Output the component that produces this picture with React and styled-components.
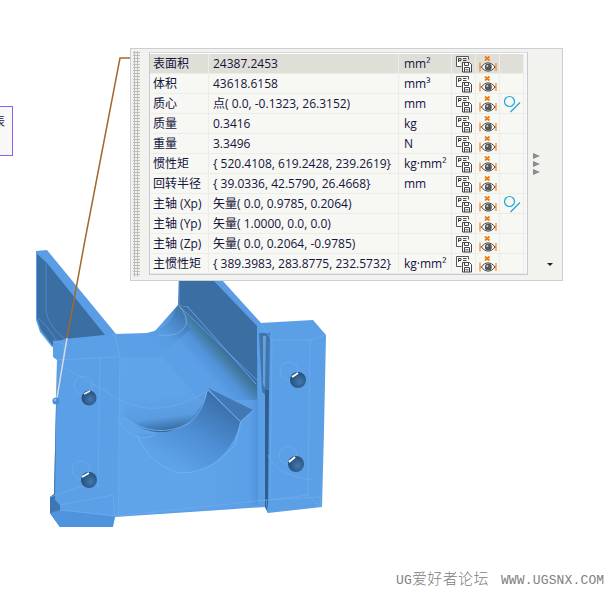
import React from "react";
import styled, { createGlobalStyle } from "styled-components";

const GlobalStyle = createGlobalStyle`
  html, body {
    margin: 0;
    padding: 0;
    background: #fff;
  }
`;

const Page = styled.div`
  position: relative;
  width: 609px;
  height: 592px;
  overflow: hidden;
  background: #fff;
  font-family: "Open Sans", "Noto Sans CJK SC", sans-serif;
`;

const Canvas = styled.svg`
  position: absolute;
  left: 0;
  top: 0;
`;

const SideTab = styled.div`
  position: absolute;
  left: -1px;
  top: 106px;
  width: 12px;
  height: 48px;
  border: 1px solid #8b5cf6;
  background: #f8f8f6;
  overflow: hidden;
  font-size: 12px;
  line-height: 30px;
  color: #1a1a40;
  text-indent: -7px;
`;

const Panel = styled.div`
  position: absolute;
  left: 130px;
  top: 48px;
  width: 433px;
  height: 233px;
  box-sizing: border-box;
  display: flex;
  border: 1px solid #cdcdd4;
  background: #f2f2ee;
`;

const Grip = styled.div`
  width: 7px;
  margin: 2px 0 3px 2px;
  background-image: radial-gradient(#bcbcbc 1.1px, transparent 1.3px);
  background-size: 3px 3px;
`;

const Table = styled.div`
  margin: 3px 0 5px 9px;
  width: 379px;
  box-sizing: border-box;
  border: 1px solid #c9c9d6;
  border-top-color: #d8d8e0;
  background: #fff;
  padding-top: 1px;
  overflow: hidden;
`;

const Row = styled.div`
  display: grid;
  grid-template-columns: 59px 190px 53px 24px 24px 24px 4px;
  height: 20px;
  box-sizing: border-box;
  border-bottom: 1px solid #ecece8;
  color: #14143c;
  font-size: 12px;
  line-height: 19px;
  white-space: nowrap;
`;

const Cell = styled.div`
  box-sizing: border-box;
  padding-left: ${(p) => p.$pad || 4}px;
  background: ${(p) => (p.$head ? "#dfdfd8" : "#f7f7f4")};
  border-right: 1px solid #ecece8;
  overflow: hidden;
`;

const IconCell = styled(Cell)`
  padding-left: 0;
  display: flex;
  align-items: center;
  justify-content: center;
`;

const Edge = styled.div`
  background: #f7f7f4;
`;

const SideArrows = styled.div`
  display: flex;
  flex-direction: column;
  gap: 2px;
  margin: 104px 0 0 5px;
`;

const ArrowRight = styled.div`
  width: 0;
  height: 0;
  border-left: 7px solid #8c8c8c;
  border-top: 3px solid transparent;
  border-bottom: 3px solid transparent;
`;

const DropCaret = styled.div`
  position: absolute;
  left: 416px;
  top: 214px;
  width: 0;
  height: 0;
  border-top: 3px solid #222;
  border-left: 3px solid transparent;
  border-right: 3px solid transparent;
`;

const Watermark = styled.div`
  position: absolute;
  left: 396px;
  top: 572px;
  font-family: "Liberation Mono", "Noto Sans CJK SC", monospace;
  font-size: 13px;
  line-height: 18px;
  letter-spacing: 0.15px;
  color: #808080;
  white-space: nowrap;
`;

const WatermarkHan = styled.span`
  font-size: 15px;
  font-weight: 300;
  letter-spacing: 0.4px;
  margin-right: 12px;
`;

const SaveIcon = () => (
  <svg width="18" height="18" viewBox="0 0 18 18">
    <path d="M1.5 1.5h12v3M1.5 1.5v10h5" fill="#fff" stroke="#555" strokeWidth="1" />
    <path d="M3.5 7V3.5h2.5v2H3.5M8 3.5h3.5M8 5.5h3.5" fill="none" stroke="#444" strokeWidth="1" />
    <path d="M7.5 7.5h7l2 2v7.5h-9z" fill="#fff" stroke="#444" strokeWidth="1" />
    <path d="M9.5 7.5v3h4v-3M9.5 17v-4.5h5V17" fill="none" stroke="#444" strokeWidth="1" />
    <path d="M10.5 14.5h3M10.5 16h3" stroke="#777" strokeWidth="1" />
  </svg>
);

const EyeIcon = () => (
  <svg width="18" height="18" viewBox="0 0 18 18">
    <path d="M6 1.5l4.5 4M10.5 1.5l-4.5 4" stroke="#f07c10" strokeWidth="1.7" />
    <path d="M1 7.5v9M1 12h2.5M17 12h-1.5M17 8v8" stroke="#f07c10" strokeWidth="1.1" fill="none" />
    <path d="M2.5 12C6 6.5 12 6.5 16 12C12 17.5 6 17.5 2.5 12z" fill="#fff" stroke="#444" strokeWidth="1" />
    <circle cx="9.3" cy="12" r="3.5" fill="#555" />
    <circle cx="8.3" cy="11" r="1" fill="#ccc" />
  </svg>
);

const MeasureIcon = () => (
  <svg width="18" height="18" viewBox="0 0 18 18">
    <circle cx="6.5" cy="6.5" r="5" fill="none" stroke="#1ea9d8" strokeWidth="1.2" />
    <path d="M7.5 17L17 7.5" stroke="#1ea9d8" strokeWidth="1.2" />
  </svg>
);

const Model = () => (
  <Canvas width="609" height="592" viewBox="0 0 609 592">
    <defs>
      <linearGradient id="saddle" x1="198" y1="365" x2="220" y2="345" gradientUnits="userSpaceOnUse">
        <stop offset="0" stopColor="#5b9fe6" />
        <stop offset="0.45" stopColor="#5293da" />
        <stop offset="0.85" stopColor="#41799f" />
        <stop offset="1" stopColor="#3b6ea3" />
      </linearGradient>
      <linearGradient id="neck" x1="178" y1="312" x2="150" y2="345" gradientUnits="userSpaceOnUse">
        <stop offset="0" stopColor="#3f78b3" stopOpacity="0.7" />
        <stop offset="0.6" stopColor="#3f78b3" stopOpacity="0.1" />
        <stop offset="1" stopColor="#3f78b3" stopOpacity="0" />
      </linearGradient>
      <linearGradient id="bowl" x1="222" y1="400" x2="180" y2="468" gradientUnits="userSpaceOnUse">
        <stop offset="0" stopColor="#3a6fa8" />
        <stop offset="0.5" stopColor="#4c8cd2" />
        <stop offset="1" stopColor="#5ea2e8" />
      </linearGradient>
      <linearGradient id="lip" x1="160" y1="395" x2="165" y2="432" gradientUnits="userSpaceOnUse">
        <stop offset="0" stopColor="#2f5f92" stopOpacity="0" />
        <stop offset="0.6" stopColor="#2f5f92" stopOpacity="0.1" />
        <stop offset="1" stopColor="#2f5f92" stopOpacity="0.9" />
      </linearGradient>
      <linearGradient id="front" x1="200" y1="0" x2="262" y2="0" gradientUnits="userSpaceOnUse">
        <stop offset="0" stopColor="#5fa3e9" />
        <stop offset="0.8" stopColor="#5b9fe6" />
        <stop offset="1" stopColor="#4c8ed6" />
      </linearGradient>
      <radialGradient id="hole" cx="0.6" cy="0.6" r="0.6">
        <stop offset="0" stopColor="#4478ad" />
        <stop offset="1" stopColor="#234d7a" />
      </radialGradient>
    </defs>

    {/* back fins */}
    <path d="M36 251L47 250L116 334L66 345L52 347L40 332L36 320Z" fill="#5a9de4" />
    <path d="M37 254L47 263L105 335L64 339L53 346L41 330L37 318Z" fill="#3b6ea3" />
    <path d="M46 263V310Q47 325 66 340M38 318Q47 325 56 340" fill="none" stroke="#5590d0" strokeWidth="0.8" />
    <path d="M212 280H222L261 323V345L256 330Z" fill="#5a9de4" />

    {/* body */}
    <path
      d="M53 341L115 334L147 333Q172 328 178 305L257 326L260 323L313 320L326 335L324 430L322 507L268 513L265 507L115 517L113 524L60 527L50 513V497L54 494L57 360L53 357Z"
      fill="#5b9fe6"
    />
    <path d="M57 360L54 494L50 497V513L60 527L60 505L55 500Z" fill="#3f76b0" />
    <path d="M50 513L60 527H113L115 517L60 510Z" fill="#4f93dd" />
    <path d="M120 357H258V505L118 516Z" fill="url(#front)" />

    {/* saddle and the right fin's inner face */}
    <path d="M147 340L178 305L187 307L257 383V400H200Z" fill="url(#saddle)" />
    <path d="M120 340L147 333Q172 328 178 305L190 330L160 355Z" fill="url(#neck)" />
    <path d="M179 280H213L257 326V385L187 307L178 305Z" fill="#3b6ea3" />
    <path d="M179 280V306L257 380" fill="none" stroke="#62a0e4" strokeWidth="0.8" />
    <path d="M187 306L256 384M179 306Q188 315 186 325Q180 338 158 335" fill="none" stroke="#72aeed" strokeWidth="0.8" />

    {/* groove */}
    <path d="M259 333H270L269 398L262 392Z" fill="#3f76b0" />
    <path d="M263 336H266L265 388L263 384Z" fill="#6a9fd5" />
    <path d="M265 390H269L268 513L265 507Z" fill="#2f5f92" />

    {/* half-round cut */}
    <path d="M123 417Q160 445 190 422Q204 408 207 390L175 385L125 400Z" fill="url(#lip)" />
    <path d="M208 390L240 422Q236 445 212 465Q190 480 165 470Q145 460 138 433Q175 438 195 415Q205 403 208 390Z" fill="url(#bowl)" />
    <path d="M208 388L253 410L240 422Z" fill="#4279b5" />
    <path d="M208 390L240 421M123 417Q155 440 188 424Q204 412 207 390" fill="none" stroke="#79b4f0" strokeWidth="0.8" />
    <path d="M138 437Q148 462 175 472Q205 478 235 445L241 421L254 410" fill="none" stroke="#79b4f0" strokeWidth="0.8" />
    <path d="M118 420Q135 445 155 435" fill="none" stroke="#7ab3ee" strokeWidth="0.7" />

    {/* thin edges */}
    <g fill="none" stroke="#6fabec" strokeWidth="0.8">
      <path d="M57 360L116 357H120M115 335L120 357L118 516M64 345V360M53 341L68 345" />
      <path d="M60 505L113 495L115 517M60 510L118 516M50 497L80 487L100 485" />
      <path d="M100 357L98 490M60 365Q95 385 120 400Q160 420 205 392" />
      <path d="M118 516L266 500L268 512M266 500L320 497L321 507" />
      <path d="M262 325L272 340H310L326 335M310 340L308 495L320 507" />
      <path d="M270 500L307 495M272 340L270 498M268 455Q275 475 313 480" />
      <circle cx="83" cy="385" r="9" />
      <circle cx="81" cy="470" r="9" />
      <circle cx="289" cy="371" r="9" />
      <circle cx="288" cy="455" r="9" />
    </g>

    {/* bolt holes */}
    <circle cx="89" cy="398" r="7.5" fill="url(#hole)" />
    <path d="M84 394L90 391" stroke="#e8f1fb" strokeWidth="1.6" />
    <circle cx="89" cy="480" r="8" fill="url(#hole)" />
    <path d="M82 477L89 473" stroke="#fff" strokeWidth="2" />
    <circle cx="298" cy="380" r="8" fill="url(#hole)" />
    <path d="M292 377L298 373" stroke="#fff" strokeWidth="2" />
    <circle cx="296" cy="464" r="8" fill="url(#hole)" />
    <path d="M289 462L295 457" stroke="#fff" strokeWidth="2" />

    {/* leader line */}
    <path d="M131 58H120L85 240L67 338" fill="none" stroke="#a0692f" strokeWidth="1.5" />
    <path d="M67 338L57 398" fill="none" stroke="#d9dde2" strokeWidth="1.5" />
    <circle cx="56" cy="401" r="3.6" fill="#4a8fd6" />
    <circle cx="55" cy="400" r="1.2" fill="#8cc0f0" />
  </Canvas>
);

const rows = [
  ["表面积", "24387.2453", "mm²", false],
  ["体积", "43618.6158", "mm³", false],
  ["质心", "点( 0.0, -0.1323, 26.3152)", "mm", true],
  ["质量", "0.3416", "kg", false],
  ["重量", "3.3496", "N", false],
  ["惯性矩", "{ 520.4108, 619.2428, 239.2619}", "kg·mm²", false],
  ["回转半径", "{ 39.0336, 42.5790, 26.4668}", "mm", false],
  ["主轴 (Xp)", "矢量( 0.0, 0.9785, 0.2064)", "", true],
  ["主轴 (Yp)", "矢量( 1.0000, 0.0, 0.0)", "", false],
  ["主轴 (Zp)", "矢量( 0.0, 0.2064, -0.9785)", "", false],
  ["主惯性矩", "{ 389.3983, 283.8775, 232.5732}", "kg·mm²", false],
  ["", "", "", false],
];

export default function App() {
  return (
    <Page>
      <GlobalStyle />
      <Model />
      <SideTab>表</SideTab>
      <Panel>
        <Grip />
        <Table>
          {rows.map(([name, value, unit, measure], i) => (
            <Row key={i}>
              <Cell $head={i === 0} $pad={3}>{name}</Cell>
              <Cell $head={i === 0}>{value}</Cell>
              <Cell $head={i === 0} $pad={5}>{unit}</Cell>
              <IconCell $head={i === 0}>{name && <SaveIcon />}</IconCell>
              <IconCell $head={i === 0}>{name && <EyeIcon />}</IconCell>
              <IconCell $head={i === 0}>{measure && <MeasureIcon />}</IconCell>
              <Edge />
            </Row>
          ))}
        </Table>
        <SideArrows>
          <ArrowRight />
          <ArrowRight />
          <ArrowRight />
        </SideArrows>
        <DropCaret />
      </Panel>
      <Watermark>
        UG<WatermarkHan>爱好者论坛</WatermarkHan>WWW.UGSNX.COM
      </Watermark>
    </Page>
  );
}
